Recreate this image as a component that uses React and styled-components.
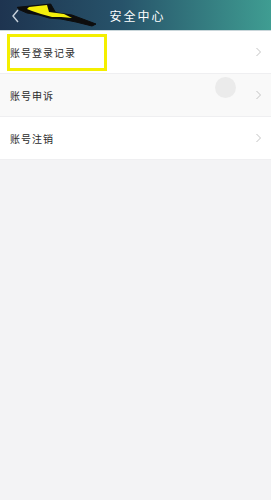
import React from 'react';
import styled, { createGlobalStyle } from 'styled-components';

const GlobalStyle = createGlobalStyle`
  html, body {
    margin: 0;
    padding: 0;
    background: #f3f3f5;
    font-family: "Noto Sans CJK SC", "Noto Sans", sans-serif;
  }
`

const Page = styled.div`
  width: 271px;
  height: 500px;
  background: #f3f3f5;
  position: relative;
  overflow: hidden;
`

const Header = styled.div`
  height: 30px;
  display: grid;
  grid-template-columns: 1fr auto 1fr;
  align-items: center;
  padding: 0 11px;
  position: relative;
  background: linear-gradient(90deg, #1e3450 0%, #27536a 45%, #3f9d92 100%);
  border-bottom: 1px solid #c9d6da;
`

const BackButton = styled.div`
  display: flex;
  align-items: center;
  height: 16px;
  margin-top: 2px;
`

const Bolt = styled.svg`
  position: absolute;
  left: 14px;
  top: 0;
`

const Title = styled.div`
  color: #ffffff;
  font-size: 12px;
  letter-spacing: 2px;
  margin-right: -4px;
`

const List = styled.div`
  display: flex;
  flex-direction: column;
`

const Row = styled.div`
  height: 42px;
  display: flex;
  align-items: center;
  justify-content: space-between;
  padding: 0 9px 0 10px;
  background: ${p => (p.$shade ? '#f9f9f9' : '#ffffff')};
  border-bottom: 1px solid #efeff1;
  position: relative;
`

const Label = styled.span`
  font-size: 10px;
  color: #2a2a2a;
  letter-spacing: 1px;
`

const Chevron = styled.svg`
  flex-shrink: 0;
`

const Highlight = styled.div`
  position: absolute;
  left: 7px;
  top: 3px;
  width: 94px;
  height: 31px;
  border: 3px solid #f4ef00;
`

const Touch = styled.div`
  position: absolute;
  left: 215px;
  top: 77px;
  width: 21px;
  height: 21px;
  border-radius: 50%;
  background: #ebebeb;
`

const items = ['账号登录记录', '账号申诉', '账号注销']

const App = () => (
  <Page>
    <GlobalStyle />
    <Header>
      <BackButton>
        <svg width="10" height="16" viewBox="0 0 10 16">
          <path d="M7 2 L2 8 L7 14" fill="none" stroke="#c8d2dc" strokeWidth="1.4" />
        </svg>
      </BackButton>
      <Title>安全中心</Title>
      <span />
      <Bolt width="84" height="28" viewBox="0 0 84 28">
        <polygon
          points="3.3,7.3 36.7,4 41.7,12.7 58,15 82,24 78,26 62,22 47,19 35,18 25,15 13,13 5,9.5"
          fill="#0d0d0d"
          stroke="#0d0d0d"
          strokeWidth="1"
          strokeLinejoin="round"
        />
        <polygon
          points="15,7 33,5 35,12 50,14 58,18 47,17 38,17 27,14 18,11 13,9"
          fill="#f4ef0c"
        />
      </Bolt>
    </Header>
    <List>
      {items.map((t, i) => (
        <Row key={t} $shade={i === 1}>
          <Label>{t}</Label>
          <Chevron width="7" height="10" viewBox="0 0 7 10">
            <path d="M1.5 1 L5.5 5 L1.5 9" fill="none" stroke="#c4c4c4" strokeWidth="1" />
          </Chevron>
          {i === 0 && <Highlight />}
        </Row>
      ))}
    </List>
    <Touch />
  </Page>
)

export default App
